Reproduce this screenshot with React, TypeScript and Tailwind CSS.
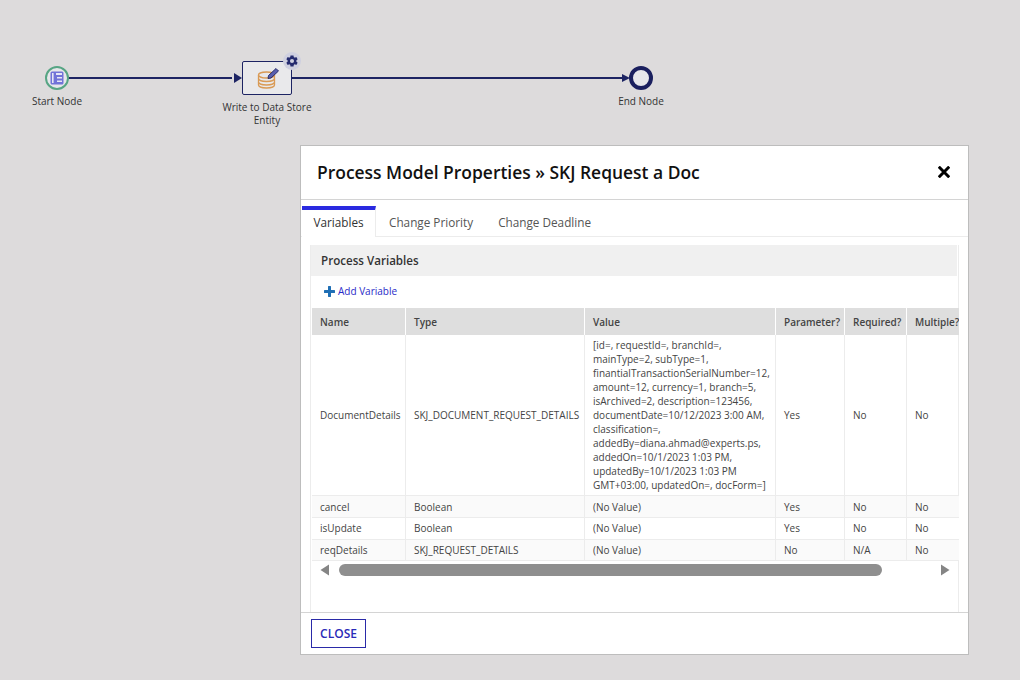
import React from "react";

const font = { fontFamily: '"Open Sans", sans-serif' };

const rows = [
  ["cancel", "Boolean", "(No Value)", "Yes", "No", "No", "h-[22px] bg-[#fafafa] [&>td]:pt-[2px]"],
  ["isUpdate", "Boolean", "(No Value)", "Yes", "No", "No", "h-[22px] bg-white"],
  ["reqDetails", "SKJ_REQUEST_DETAILS", "(No Value)", "No", "N/A", "No", "h-[21px] bg-[#fafafa]"],
];

const valueLines = [
  "[id=, requestId=, branchId=,",
  "mainType=2, subType=1,",
  "finantialTransactionSerialNumber=12,",
  "amount=12, currency=1, branch=5,",
  "isArchived=2, description=123456,",
  "documentDate=10/12/2023 3:00 AM,",
  "classification=,",
  "addedBy=diana.ahmad@experts.ps,",
  "addedOn=10/1/2023 1:03 PM,",
  "updatedBy=10/1/2023 1:03 PM",
  "GMT+03:00, updatedOn=, docForm=]",
];

const th = "border-r border-white bg-[#dedede] pl-[8px] pt-[2px] text-left font-semibold text-[#444] whitespace-nowrap overflow-hidden";
const td = "border-r border-b border-[#ececec] pl-[8px] text-[#444] whitespace-nowrap overflow-hidden";

export default function App() {
  return (
    <div className="relative h-[680px] w-[1020px] overflow-hidden bg-[#dddbdc]" style={font}>
      {/* Flow lines */}
      <svg className="absolute left-0 top-0" width="700" height="110">
        <line x1="68" y1="78" x2="232" y2="78" stroke="#1d2463" strokeWidth="2" />
        <polygon points="234,73 242,78 234,83" fill="#1d2463" />
        <line x1="292" y1="78" x2="622" y2="78" stroke="#1d2463" strokeWidth="2" />
        <polygon points="622,74 630,78 622,82" fill="#1d2463" />
      </svg>

      {/* Start node */}
      <div className="absolute left-[45px] top-[66px] flex h-[24px] w-[24px] items-center justify-center rounded-full border-[2px] border-[#57a584] bg-[#e6e6ea]">
        <svg width="14" height="14" viewBox="0 0 14 14">
          <rect x="0.5" y="0.5" width="13" height="13" rx="1.5" fill="#7173d8" />
          <rect x="2" y="2" width="1.6" height="10" fill="#e6e6f5" />
          <rect x="6" y="2" width="6" height="2" fill="#e6e6f5" />
          <rect x="7" y="6" width="5" height="1.5" fill="#e6e6f5" />
          <rect x="7" y="9.5" width="5" height="1.5" fill="#e6e6f5" />
        </svg>
      </div>
      <div className="absolute left-[17px] top-[94px] w-[80px] text-center text-[10px] leading-[14px] text-[#333]">Start Node</div>

      {/* Task node */}
      <div className="absolute left-[242px] top-[61px] flex h-[34px] w-[50px] items-center justify-center rounded-[2px] border-[1.5px] border-[#1d2463] bg-[#e9e9eb]">
        <svg width="26" height="22" viewBox="0 0 26 22" fill="none">
          <ellipse cx="12.5" cy="8" rx="8" ry="3" stroke="#d99a55" strokeWidth="1.3" />
          <path d="M4.500 8v10c0 1.700 3.600 3 8 3s8-1.300 8-3V8" stroke="#d99a55" strokeWidth="1.3" />
          <path d="M4.500 11.500c0 1.700 3.600 3 8 3s8-1.300 8-3M4.500 15c0 1.700 3.600 3 8 3s8-1.300 8-3" stroke="#d99a55" strokeWidth="1.3" />
          <path d="M14.500 8.500l7.500-7 2.500 2.500-7.500 7-3 .5z" fill="#5a5fae" stroke="#1d2463" strokeWidth="0.9" />
        </svg>
      </div>
      <div className="absolute left-[283px] top-[52px] flex h-[18px] w-[18px] items-center justify-center rounded-full bg-[#cfd0e0]">
        <svg width="14" height="14" viewBox="0 0 24 24" fill="#252b6f">
          <path d="M19.400 13a7.600 7.600 0 0 0 0-2l2.300-1.800-2.300-4-2.700 1.100a7.500 7.500 0 0 0-1.700-1L14.600 2.500H9.400L9 5.300a7.500 7.500 0 0 0-1.700 1L4.600 5.200l-2.300 4L4.600 11a7.600 7.600 0 0 0 0 2l-2.300 1.800 2.300 4 2.700-1.100a7.500 7.500 0 0 0 1.700 1l.4 2.800h5.200l.4-2.800a7.500 7.500 0 0 0 1.700-1l2.700 1.100 2.300-4zM12 15.500a3.500 3.500 0 1 1 0-7 3.500 3.500 0 0 1 0 7z" />
        </svg>
      </div>
      <div className="absolute left-[211px] top-[101px] w-[112px] text-center text-[10px] leading-[13px] text-[#333]">
        Write to Data Store
        <br />
        Entity
      </div>

      {/* End node */}
      <div className="absolute left-[629px] top-[66px] h-[24px] w-[24px] rounded-full border-[4px] border-[#1a1f5e] bg-[#e6e6ea]" />
      <div className="absolute left-[601px] top-[94px] w-[80px] text-center text-[10px] leading-[14px] text-[#333]">End Node</div>

      {/* Dialog */}
      <div className="absolute left-[300px] top-[145px] flex h-[510px] w-[669px] flex-col border border-[#bdbdbd] bg-white">
        <div className="flex h-[54px] shrink-0 items-center justify-between border-b border-[#d4d4d4] pb-[1px] pl-[16px] pr-[18px]">
          <h1 className="text-[17.45px] font-semibold leading-[24px] text-[#111]">Process Model Properties » SKJ Request a Doc</h1>
          <svg width="12" height="12" viewBox="0 0 12 12">
            <path d="M1.800 1.800L10.200 10.200M10.200 1.800L1.800 10.200" stroke="#000" strokeWidth="3" strokeLinecap="square" />
          </svg>
        </div>

        <div className="mt-[6px] flex h-[31px] shrink-0 border-b border-[#ececec] pl-[1px] text-[11.75px]">
          <div className="flex h-[31px] w-[74px] items-center justify-center border-r border-t-[4px] border-[#ececec] border-t-[#2a2ae0] bg-white pb-[1px] text-[#333]">Variables</div>
          <div className="flex items-center pl-[13px] pt-[3px] text-[#555]">Change Priority</div>
          <div className="flex items-center pl-[25px] pt-[3px] text-[#555]">Change Deadline</div>
        </div>

        <div className="ml-[9px] mt-[8px] flex min-h-0 w-[649px] flex-1 flex-col border-x border-[#ececec]">
          <div className="flex h-[31px] w-[646px] shrink-0 items-center bg-[#f0f0f0] pl-[10px] text-[11.6px] font-semibold text-[#333]">Process Variables</div>
          <div className="flex h-[32px] shrink-0 items-center gap-[3px] pb-[1px] pl-[13px] text-[10px] text-[#2a2ac8]">
            <svg width="11" height="11" viewBox="0 0 11 11">
              <path d="M5.500 1v9M1 5.500h9" stroke="#1f6fb5" strokeWidth="3" strokeLinecap="round" />
            </svg>
            Add Variable
          </div>
          <table className="ml-[1px] w-[647px] shrink-0 table-fixed border-separate border-spacing-0 text-[10px]">
            <colgroup>
              <col className="w-[94px]" />
              <col className="w-[179px]" />
              <col className="w-[191px]" />
              <col className="w-[69px]" />
              <col className="w-[62px]" />
              <col className="w-[52px]" />
            </colgroup>
            <thead>
              <tr className="h-[27px]">
                <th className={th}>Name</th>
                <th className={th}>Type</th>
                <th className={th}>Value</th>
                <th className={th}>Parameter?</th>
                <th className={th}>Required?</th>
                <th className="bg-[#dedede] pl-[8px] pt-[2px] text-left font-semibold text-[#444] whitespace-nowrap overflow-hidden">Multiple?</th>
              </tr>
            </thead>
            <tbody>
              <tr className="h-[161px]">
                <td className={td}>DocumentDetails</td>
                <td className={td}>SKJ_DOCUMENT_REQUEST_DETAILS</td>
                <td className={td + " leading-[14px]"}>
                  {valueLines.map((l) => (
                    <div key={l}>{l}</div>
                  ))}
                </td>
                <td className={td}>Yes</td>
                <td className={td}>No</td>
                <td className="border-b border-[#ececec] pl-[8px] text-[#444]">No</td>
              </tr>
              {rows.map((r) => (
                <tr key={r[0]} className={r[6]}>
                  <td className={td}>{r[0]}</td>
                  <td className={td}>{r[1]}</td>
                  <td className={td}>{r[2]}</td>
                  <td className={td}>{r[3]}</td>
                  <td className={td}>{r[4]}</td>
                  <td className="border-b border-[#ececec] pl-[8px] text-[#444]">{r[5]}</td>
                </tr>
              ))}
            </tbody>
          </table>
          <div className="ml-[9px] mt-[2px] flex h-[14px] w-[630px] shrink-0 items-center">
            <svg width="10" height="12" viewBox="0 0 10 12">
              <polygon points="9,0.500 9,11.500 0.500,6" fill="#858585" />
            </svg>
            <div className="ml-[9px] h-[12px] w-[544px] rounded-[6px] bg-[#8f8f8f]" />
            <svg className="ml-[58px]" width="10" height="12" viewBox="0 0 10 12">
              <polygon points="1,0.500 1,11.500 9.500,6" fill="#858585" />
            </svg>
          </div>
        </div>

        <div className="flex h-[42px] shrink-0 items-start border-t border-[#d4d4d4] pl-[10px] pt-[6px]">
          <button className="flex h-[29px] w-[55px] items-center justify-center border border-[#2a2aa8] bg-white text-[12px] font-semibold text-[#2a2ab8]">CLOSE</button>
        </div>
      </div>
    </div>
  );
}
